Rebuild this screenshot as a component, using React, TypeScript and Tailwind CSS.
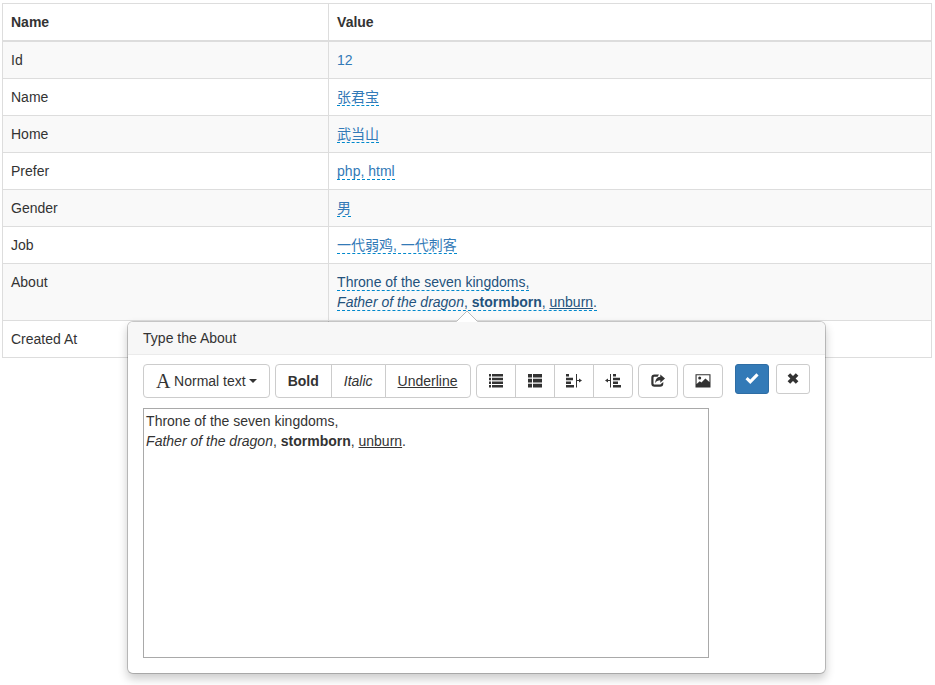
import React, { useState } from 'react';
import clsx from 'clsx';

interface Field {
  name: string;
  value: string;
  editable: boolean;
}

const FIELDS: Field[] = [
  { name: 'Id', value: '12', editable: false },
  { name: 'Name', value: '张君宝', editable: true },
  { name: 'Home', value: '武当山', editable: true },
  { name: 'Prefer', value: 'php, html', editable: true },
  { name: 'Gender', value: '男', editable: true },
  { name: 'Job', value: '一代弱鸡, 一代刺客', editable: true },
];

const CELL = 'border border-[#ddd] p-2 align-top';
const BTN = 'flex h-[34px] items-center justify-center border border-[#ccc] bg-white px-3 cursor-pointer hover:bg-[#e6e6e6]';

const Icon: React.FC<{ children: React.ReactNode; wide?: boolean }> = ({ children, wide }) => (
  <svg
    className={clsx('h-3.5', wide ? 'w-4 -mx-px' : 'w-3.5')}
    viewBox={wide ? '0 0 16 14' : '0 0 14 14'}
    fill="currentColor"
    aria-hidden="true"
  >
    {children}
  </svg>
);

const ListIcon = () => (
  <Icon>
    <path d="M0 0h2v2.6H0zM3 0h11v2.6H3zM0 3.700h2v2.600H0zM3 3.700h11v2.600H3zM0 7.400h2V10H0zM3 7.400h11V10H3zM0 11h2v2.600H0zM3 11h11v2.600H3z" />
  </Icon>
);

const ThListIcon = () => (
  <Icon>
    <path d="M0 0h4v3.600H0zM5 0h9v3.600H5zM0 4.800h4v3.700H0zM5 4.800h9v3.700H5zM0 9.700h4v3.700H0zM5 9.700h9v3.700H5z" />
  </Icon>
);

const IndentRightIcon = () => (
  <Icon wide>
    <path d="M0 0h3v2.600H0zM0 3.700h7v2.600H0zM0 7.400h5V10H0zM0 11h8v2.600H0zM10 0h1v13.600h-1zM11 6h2V4.500L16 6.500l-3 2V7h-2z" />
  </Icon>
);

const IndentLeftIcon = () => (
  <Icon wide>
    <path d="M8 0h3v2.600H8zM8 3.700h7v2.600H8zM8 7.400h5V10H8zM8 11h8v2.600H8zM5 0h1v13.600H5zM5 6H3V4.500L0 6.500l3 2V7h2z" />
  </Icon>
);

const ShareIcon = () => (
  <Icon>
    <path d="M8 .5H3.500A3.200 3.200 0 0 0 .3 3.700v5.800A3.200 3.200 0 0 0 3.500 12.700h5.600a3.200 3.200 0 0 0 3.200-3.200V8l-2.200 1.800c-.1.500-.5.700-1 .7H3.600c-.7 0-1.100-.4-1.100-1.100V3.800c0-.7.400-1.100 1.100-1.100h3z" />
    <path d="M9.300.5 14 4.600 9.300 8.700V6.300C7 6.300 5.400 7 4.200 9.200 4.300 5.800 5.800 3 9.300 2.800z" />
  </Icon>
);

const PictureIcon = () => (
  <Icon wide>
    <path fillRule="evenodd" d="M.5.200h15v13.200H.5zM1.600 1.300V10l3.200-2.800 1.600 1.200L10.400 4.500l4 3.500V1.300z" />
    <circle cx="4.700" cy="4" r="1.500" />
  </Icon>
);

const OkIcon = () => (
  <Icon>
    <path d="M.5 7.200 2.600 5l2.700 2.500L11.400 1.200l2.200 2.200-8.300 8.500z" />
  </Icon>
);

const RemoveIcon = () => (
  <Icon>
    <path d="M4.200 1.200 7 4l2.800-2.800 2.600 2.600L9.600 6.500l2.800 2.700-2.600 2.600L7 9l-2.800 2.800-2.600-2.600 2.800-2.700-2.800-2.700z" />
  </Icon>
);

const AboutText = () => (
  <>
    Throne of the seven kingdoms,
    <br />
    <i>Father of the dragon</i>, <b>stormborn</b>, <u>unburn</u>.
  </>
);

const Toolbar = () => (
  <div className="flex gap-[5px]" role="toolbar" aria-label="Formatting">
    <button type="button" className={clsx(BTN, 'rounded')}>
      <span className="w-[14px] text-center font-['Liberation_Serif',serif] text-[20px] leading-5" aria-hidden="true">A</span>
      <span className="ml-1">Normal text</span>
      <span className="ml-[3px] h-0 w-0 border-x-4 border-t-4 border-x-transparent border-t-[#333]" />
    </button>
    <div className="flex -space-x-px">
      <button type="button" className={clsx(BTN, 'rounded-l font-bold')}>Bold</button>
      <button type="button" className={clsx(BTN, 'italic')}>Italic</button>
      <button type="button" className={clsx(BTN, 'rounded-r underline')}>Underline</button>
    </div>
    <div className="flex -space-x-px">
      <button type="button" className={clsx(BTN, 'rounded-l')} aria-label="Unordered list"><ListIcon /></button>
      <button type="button" className={BTN} aria-label="Ordered list"><ThListIcon /></button>
      <button type="button" className={BTN} aria-label="Outdent"><IndentRightIcon /></button>
      <button type="button" className={clsx(BTN, 'rounded-r')} aria-label="Indent"><IndentLeftIcon /></button>
    </div>
    <button type="button" className={clsx(BTN, 'rounded')} aria-label="Insert link"><ShareIcon /></button>
    <button type="button" className={clsx(BTN, 'rounded')} aria-label="Insert image"><PictureIcon /></button>
  </div>
);

const EditPopover: React.FC<{ onClose: () => void }> = ({ onClose }) => (
  <div
    className="absolute top-full -left-[210px] z-10 mt-[9px] w-max rounded-md border border-black/20 bg-white bg-clip-padding shadow-[0_5px_10px_rgba(0,0,0,0.2)]"
    role="dialog"
    aria-labelledby="about-title"
  >
    <svg className="absolute -top-3 left-[328px] h-3 w-[22px]" viewBox="0 0 22 12" aria-hidden="true">
      <path d="M0 12 11 1l11 11z" fill="#fff" />
      <path d="M.5 11.500 11 1l10.500 10.500" fill="none" stroke="#bbb" />
    </svg>
    <h3 id="about-title" className="rounded-t-[5px] border-b border-[#ebebeb] bg-[#f7f7f7] px-[15px] py-2 leading-4">
      Type the About
    </h3>
    <form
      className="flex items-start px-[15px] pt-[9px] pb-[15px]"
      onSubmit={(e) => {
        e.preventDefault();
        onClose();
      }}
    >
      <div>
        <Toolbar />
        <div
          className="mt-2.5 h-[250px] w-[566px] overflow-auto border border-[#a9a9a9] p-0.5 outline-none"
          role="textbox"
          aria-multiline="true"
          aria-labelledby="about-title"
          contentEditable
          suppressContentEditableWarning
        >
          <AboutText />
        </div>
      </div>
      <div className="ml-3 flex gap-[7px]">
        <button
          type="submit"
          className="flex h-[30px] w-[34px] cursor-pointer items-center justify-center rounded-[3px] border border-[#2e6da4] bg-[#337ab7] text-white hover:bg-[#286090]"
          aria-label="Save"
        >
          <OkIcon />
        </button>
        <button
          type="button"
          onClick={onClose}
          className="flex h-[30px] w-[34px] cursor-pointer items-center justify-center rounded-[3px] border border-[#ccc] bg-white hover:bg-[#e6e6e6]"
          aria-label="Cancel"
        >
          <RemoveIcon />
        </button>
      </div>
    </form>
  </div>
);

export default function App() {
  const [open, setOpen] = useState(true);

  return (
    <div className="min-h-screen pt-[3px] pr-[3px] pl-0.5 font-['Liberation_Sans','Noto_Sans_CJK_SC',sans-serif] text-sm leading-5 text-[#333]">
      <table className="w-full table-fixed border-collapse border border-[#ddd]">
        <thead>
          <tr className="text-left">
            <th className={clsx(CELL, 'w-[35.1%] border-b-2')}>Name</th>
            <th className={clsx(CELL, 'border-b-2')}>Value</th>
          </tr>
        </thead>
        <tbody>
          {FIELDS.map((field) => (
            <tr key={field.name} className="odd:bg-[#f9f9f9]">
              <td className={CELL}>{field.name}</td>
              <td className={CELL}>
                <a
                  href="#"
                  className={clsx('text-[#337ab7]', field.editable && 'border-b border-dashed border-[#08c]')}
                >
                  {field.value}
                </a>
              </td>
            </tr>
          ))}
          <tr className="odd:bg-[#f9f9f9]">
            <td className={CELL}>About</td>
            <td className={CELL}>
              <div className="relative">
                <a
                  href="#about"
                  className="border-b border-dashed border-[#08c] text-[#23527c]"
                  onClick={() => setOpen(!open)}
                >
                  <AboutText />
                </a>
                {open && <EditPopover onClose={() => setOpen(false)} />}
              </div>
            </td>
          </tr>
          <tr className="odd:bg-[#f9f9f9]">
            <td className={CELL}>Created At</td>
            <td className={CELL}></td>
          </tr>
        </tbody>
      </table>
    </div>
  );
}
